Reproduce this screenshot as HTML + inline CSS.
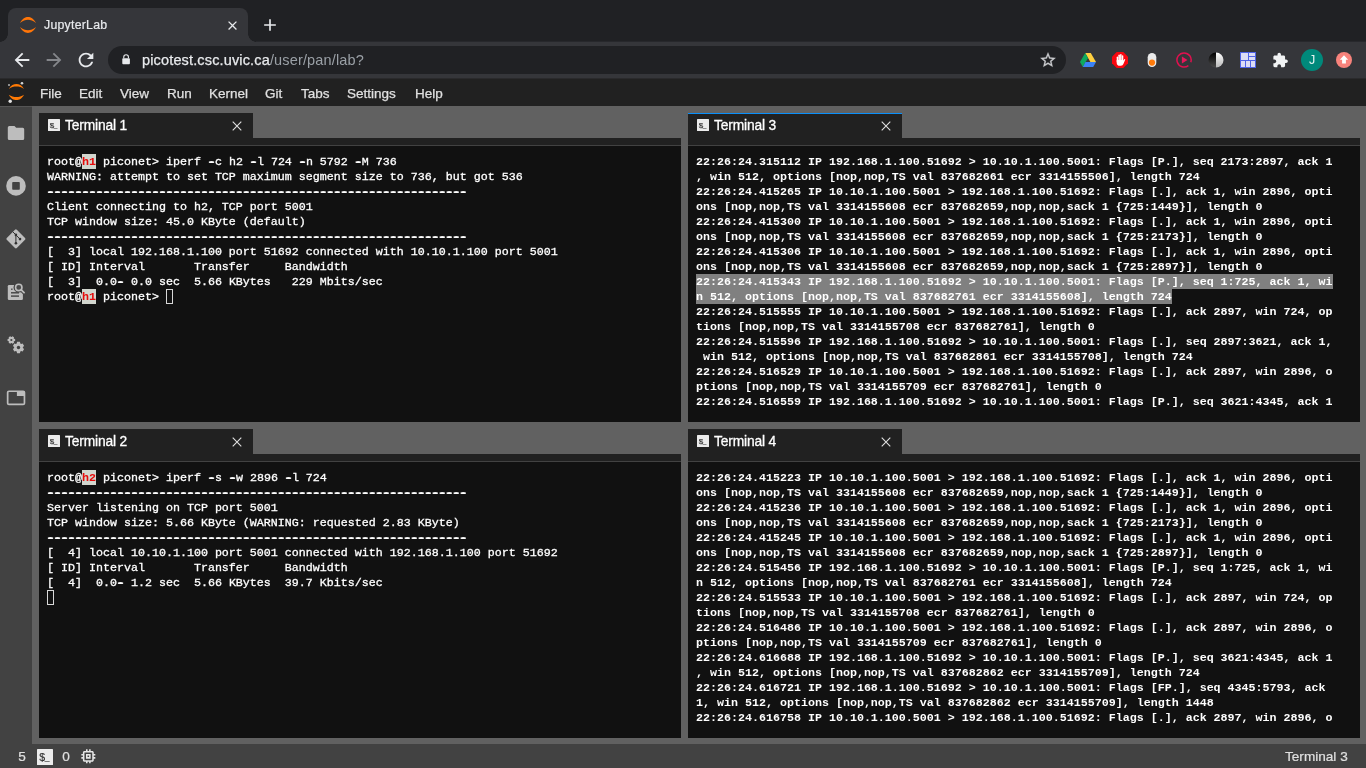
<!DOCTYPE html>
<html lang="en">
<head>
<meta charset="utf-8">
<title>JupyterLab</title>
<style>
*{box-sizing:border-box;margin:0;padding:0}
html,body{width:1366px;height:768px;overflow:hidden;background:#616161}
body{position:relative;font-family:"Liberation Sans",sans-serif;color:#e8eaed}
.abs{position:absolute}
svg{display:block}
.mi,.st,.lbl,#url,#tabtitle,.ticon,.gz{transform:translateZ(0)}
/* ---------- browser chrome ---------- */
#tabstrip{left:0;top:0;width:1366px;height:41px;background:#202124}
#tab{left:8px;top:8px;width:240px;height:34px;background:#35363a;border-radius:8px 8px 0 0}
#tab:before,#tab:after{content:"";position:absolute;bottom:0;width:8px;height:8px;background:radial-gradient(circle at 0 0,#202124 7.5px,#35363a 8px)}
#tab:before{left:-8px}
#tab:after{right:-8px;background:radial-gradient(circle at 100% 0,#202124 7.5px,#35363a 8px)}
#tabtitle{left:44px;top:17px;font-size:12.300px;line-height:16px;color:#e8eaed;white-space:nowrap;letter-spacing:.250px;-webkit-text-stroke:.200px #e8eaed}
#toolbar{left:0;top:42px;width:1366px;height:36px;background:#35363a}
#omni{left:108px;top:46px;width:958px;height:28px;border-radius:14px;background:#202124}
#url{left:142px;top:50px;font-size:14.500px;line-height:20px;white-space:nowrap;color:#e8eaed;letter-spacing:.150px}
#url{-webkit-text-stroke:.250px #e8eaed}
#url span{color:#9aa0a6;-webkit-text-stroke:0}
/* ---------- jupyterlab ---------- */
#menubar{left:0;top:78px;width:1366px;height:28px;background:#212121}
.mi{position:absolute;top:84.500px;font-size:13.500px;-webkit-text-stroke:.250px #e0e0e0;line-height:18px;color:#e0e0e0;white-space:nowrap}
#sideline{left:0;top:106px;width:32px;height:1px;background:#555}
#sidebar{left:0;top:107px;width:32px;height:637px;background:#424242}
#status{left:0;top:744px;width:1366px;height:24px;background:#424242}
.st{position:absolute;top:748px;font-size:13.600px;-webkit-text-stroke:.200px #e0e0e0;line-height:18px;color:#e0e0e0;white-space:nowrap}
/* panels */
.tabbar{position:absolute;height:25px}
.dtab{position:absolute;left:0;top:0;width:214px;height:25px;background:#212121}
.dtab.cur{box-shadow:inset 0 1px 0 #0a90fa}
.dtab .lbl{position:absolute;left:26px;top:3.800px;font-size:13.800px;letter-spacing:-.150px;-webkit-text-stroke:.300px #fff;line-height:18px;color:#fff;white-space:nowrap}
.ticon{position:absolute;left:9px;top:6px;width:12px;height:12px}
.tclose{position:absolute;left:193px;top:8px;width:10px;height:10px}
.strip{position:absolute;height:8px;background:#212121;border-bottom:1px solid #424242}
.term{position:absolute;background:#111;overflow:hidden}
.term pre{position:absolute;left:8px;top:8.500px;font-family:"Liberation Mono",monospace;font-size:11.666px;line-height:15px;color:#fff;white-space:pre;transform:translateZ(0);-webkit-text-stroke:.300px #fff}
.term.b pre{font-weight:bold;-webkit-text-stroke:0}
.hl{color:#e60a0a;font-weight:bold;-webkit-text-stroke:0}
.hlb{position:absolute;width:14px;height:15px;background:#d2d6ce}
.dl,.term i{font-style:normal;text-shadow:1px 0 0 #fff,-1px 0 0 #fff,0 -1px 0 rgba(255,255,255,.65),1px -1px 0 rgba(255,255,255,.65),-1px -1px 0 rgba(255,255,255,.65)}
.cursor{position:absolute;width:7px;height:15px;border:1px solid #d8d8d8}
.sel{position:absolute;background:#808080}
</style>
</head>
<body>
<!-- ================= CHROME ================= -->
<div id="tabstrip" class="abs"></div>
<div class="abs" style="left:0;top:41px;width:1366px;height:1px;background:#27282c"></div>
<div id="tab" class="abs"></div>
<svg class="abs" style="left:20px;top:17px" width="16" height="16" viewBox="0 0 16 16">
  <path d="M0 5.900C2.300 1.600 5.300 0 8 0s5.700 1.600 8 5.900C13.300 3.700 10.600 2.800 8 2.800S2.700 3.700 0 5.900z" fill="#ff7508"/>
  <path d="M0 10.100C2.300 14.400 5.300 16 8 16s5.700-1.600 8-5.900C13.300 12.300 10.600 13.200 8 13.200S2.700 12.300 0 10.100z" fill="#ff7508"/>
</svg>
<div id="tabtitle" class="abs">JupyterLab</div>
<svg class="abs" style="left:224.500px;top:17.500px" width="15" height="15" viewBox="0 0 24 24"><path d="M19 6.41L17.59 5 12 10.59 6.41 5 5 6.41 10.59 12 5 17.59 6.41 19 12 13.41 17.59 19 19 17.59 13.41 12z" fill="#e8eaed"/></svg>
<svg class="abs" style="left:260px;top:15px" width="20" height="20" viewBox="0 0 24 24"><path d="M19 13h-6v6h-2v-6H5v-2h6V5h2v6h6v2z" fill="#e8eaed"/></svg>
<div id="toolbar" class="abs"></div>
<svg class="abs" style="left:11px;top:49px" width="22" height="22" viewBox="0 0 24 24"><path d="M20 11H7.83l5.59-5.59L12 4l-8 8 8 8 1.41-1.41L7.83 13H20v-2z" fill="#e8eaed"/></svg>
<svg class="abs" style="left:43px;top:49px" width="22" height="22" viewBox="0 0 24 24"><path d="M12 4l-1.41 1.41L16.17 11H4v2h12.17l-5.58 5.59L12 20l8-8z" fill="#85878b"/></svg>
<svg class="abs" style="left:75px;top:49px" width="22" height="22" viewBox="0 0 24 24"><path d="M17.65 6.35C16.2 4.9 14.21 4 12 4c-4.42 0-7.99 3.58-7.99 8s3.57 8 7.99 8c3.73 0 6.84-2.55 7.73-6h-2.08c-.82 2.33-3.04 4-5.65 4-3.31 0-6-2.690-6-6s2.690-6 6-6c1.660 0 3.140.690 4.220 1.780L13 11h7V4l-2.350 2.350z" fill="#e8eaed"/></svg>
<div id="omni" class="abs"></div>
<svg class="abs" style="left:121px;top:54px" width="10.200" height="11" viewBox="0 0 12 13"><path d="M2.600 5V3.600a3.400 3.400 0 0 1 6.800 0V5h-1.300V3.600a2.100 2.100 0 0 0-4.200 0V5z" fill="#e8eaed"/><rect x="1.500" y="5" width="9" height="7" rx="1" fill="#e8eaed"/></svg>
<div id="url" class="abs">picotest.csc.uvic.ca<span>/user/pan/lab?</span></div>
<svg class="abs" style="left:1039px;top:51px" width="18" height="18" viewBox="0 0 24 24"><path d="M22 9.240l-7.190-.620L12 2 9.190 8.630 2 9.240l5.460 4.730L5.820 21 12 17.270 18.180 21l-1.630-7.030L22 9.240zM12 15.400l-3.760 2.270 1-4.280-3.320-2.880 4.380-.380L12 6.100l1.710 4.040 4.380.380-3.320 2.880 1 4.280L12 15.400z" fill="#cbcdd0" stroke="#cbcdd0" stroke-width=".400"/></svg>
<!-- extensions -->
<svg class="abs" style="left:1080px;top:52px" width="16" height="16" viewBox="0 0 16 16">
  <path d="M5.200 1h5.600L16 10.100h-5.600z" fill="#ffcf3f"/><path d="M5.200 1L0 10.100l2.800 4.900L8 5.900z" fill="#0fa95e"/><path d="M5.500 10.100H16L13.200 15H2.800z" fill="#3b82f6"/>
</svg>
<svg class="abs" style="left:1112px;top:52px" width="16" height="16" viewBox="0 0 16 16">
  <path d="M4.700 0h6.600L16 4.700v6.600L11.300 16H4.700L0 11.300V4.700z" fill="#f8060f"/>
  <rect x="4.700" y="4.400" width="1.500" height="6" rx=".750" fill="#fff"/><rect x="6.400" y="2.600" width="1.500" height="7" rx=".750" fill="#fff"/><rect x="8.100" y="2.100" width="1.500" height="7" rx=".750" fill="#fff"/><rect x="9.800" y="3.200" width="1.500" height="7" rx=".750" fill="#fff"/>
  <path d="M4.700 8h6.600v.800l1-1.500c.300-.500 1.100-.100.900.500l-1.700 4c-.500 1.200-1.300 2-2.500 2H7.600c-1.600 0-2.900-1.300-2.900-2.900z" fill="#fff"/>
</svg>
<svg class="abs" style="left:1144px;top:52px" width="16" height="16" viewBox="0 0 16 16"><rect x="3.700" y="1" width="8.600" height="14" rx="4.300" fill="#ebebeb"/><circle cx="8" cy="10.600" r="3.100" fill="#ff7a0a"/></svg>
<svg class="abs" style="left:1176px;top:52px" width="16" height="16" viewBox="0 0 16 16"><path d="M12.400 13.600A7.100 7.100 0 1 1 14.800 10.200" fill="none" stroke="#e0114f" stroke-width="1.500"/><path d="M5.900 4.600l5.600 3.400-5.600 3.400z" fill="#e8175a"/></svg>
<svg class="abs" style="left:1208px;top:52px" width="16" height="16" viewBox="0 0 16 16"><defs><linearGradient id="hg" x1="0" y1="0" x2="0" y2="1"><stop offset="0" stop-color="#fff"/><stop offset="1" stop-color="#b8b8b8"/></linearGradient><linearGradient id="hb" x1="0" y1="0" x2="0" y2="1"><stop offset="0" stop-color="#000"/><stop offset="1" stop-color="#4a4a4a"/></linearGradient></defs><path d="M8 .5a7.500 7.500 0 0 0 0 15z" fill="url(#hb)"/><path d="M8 .5a7.500 7.500 0 0 1 0 15z" fill="url(#hg)"/></svg>
<svg class="abs" style="left:1240px;top:52px" width="16" height="16" viewBox="0 0 16 16"><rect width="16" height="16" fill="#4f63e6"/><rect x="1" y="1" width="7" height="7" fill="#dcdcf5"/><rect x="9" y="1" width="6" height="3" fill="#dcdcf5"/><rect x="9" y="5" width="6" height="3" fill="#dcdcf5"/><rect x="1" y="9" width="4" height="6" fill="#dcdcf5"/><rect x="6" y="9" width="4" height="6" fill="#dcdcf5"/><rect x="11" y="9" width="4" height="6" fill="#dcdcf5"/></svg>
<svg class="abs" style="left:1271.700px;top:51.600px" width="16.500" height="16.500" viewBox="0 0 24 24"><path d="M20.500 11H19V7c0-1.100-.900-2-2-2h-4V3.500C13 2.120 11.880 1 10.500 1S8 2.120 8 3.500V5H4c-1.100 0-1.990.900-1.990 2v3.800H3.500c1.490 0 2.700 1.210 2.700 2.700s-1.210 2.700-2.700 2.700H2V20c0 1.100.900 2 2 2h3.800v-1.500c0-1.490 1.210-2.700 2.700-2.700 1.490 0 2.700 1.210 2.700 2.700V22H17c1.100 0 2-.900 2-2v-4h1.500c1.380 0 2.500-1.120 2.500-2.500S21.880 11 20.500 11z" fill="#f1f3f4"/></svg>
<div class="abs" style="left:1301px;top:49px;width:22px;height:22px;border-radius:11px;background:#00897b"></div>
<div class="abs" style="left:1301px;top:49px;width:22px;height:22px;text-align:center;font-size:12.500px;line-height:22px;color:#e6f5f3;transform:translateZ(0)">J</div>
<svg class="abs" style="left:1336px;top:52px" width="16" height="16" viewBox="0 0 16 16"><circle cx="8" cy="8" r="8" fill="#f8837c"/><path d="M8 3.300l4.200 4.400H9.900v3.800H6.100V7.700H3.800z" fill="#fff"/></svg>

<!-- ================= JUPYTERLAB ================= -->
<div id="menubar" class="abs"></div>
<div class="abs" style="left:0;top:78px;width:1366px;height:1px;background:#2a2a2c"></div>
<svg class="abs" style="left:0;top:78px" width="32" height="28" viewBox="0 0 32 28">
  <path d="M8.800 10.900C11 7 13.600 5.900 16.400 5.900S21.800 7 24 10.900C21.600 9 19 8.400 16.400 8.400S11.200 9 8.800 10.900z" fill="#ff7a05"/>
  <path d="M8.800 16.800C11 20.900 13.600 22 16.400 22s5.400-1.100 7.600-5.200C21.600 18.500 19 19.100 16.400 19.100S11.200 18.500 8.800 16.800z" fill="#ff7a05"/>
  <circle cx="9" cy="7" r="1" fill="#b5b5b5"/><circle cx="22" cy="5.300" r="1.300" fill="#d5d5d5"/><circle cx="10.200" cy="23.200" r="1.700" fill="#e2e2e2"/>
</svg>
<div class="mi" style="left:40px">File</div>
<div class="mi" style="left:79px">Edit</div>
<div class="mi" style="left:120px">View</div>
<div class="mi" style="left:167px">Run</div>
<div class="mi" style="left:209px">Kernel</div>
<div class="mi" style="left:265px">Git</div>
<div class="mi" style="left:301px">Tabs</div>
<div class="mi" style="left:347px">Settings</div>
<div class="mi" style="left:415px">Help</div>
<div id="sideline" class="abs"></div>
<div id="sidebar" class="abs"></div>
<!--SIDE_START-->
<svg class="abs" style="left:0;top:107px" width="32" height="637" viewBox="0 107 32 637">
<path d="M9.300 126h5.200l1.700 1.800h6.500a1.500 1.500 0 0 1 1.500 1.500v9.200a1.500 1.500 0 0 1-1.500 1.500h-13.400a1.500 1.500 0 0 1-1.500-1.500v-11a1.500 1.500 0 0 1 1.500-1.500z" fill="#bdbdbd"/>
<circle cx="16" cy="185.900" r="9.800" fill="#bdbdbd"/><rect x="12.200" y="182.100" width="7.600" height="7.600" rx=".800" fill="#424242"/>
<rect x="-7.100" y="-7.100" width="14.200" height="14.200" rx="1.300" transform="translate(15.900 238.800) rotate(45)" fill="#bdbdbd"/>
<path d="M12.800 231.800L20 239.100M15.900 234.900V243.300" stroke="#303030" stroke-width="1" fill="none"/><circle cx="15.900" cy="234.900" r="1.300" fill="#303030"/><circle cx="15.900" cy="243.300" r="1.300" fill="#303030"/><circle cx="20" cy="239.100" r="1.300" fill="#303030"/>
<rect x="7.800" y="285" width="15.100" height="15.100" rx="1.300" fill="#bdbdbd"/>
<path d="M9.400 286.400h5v12.200h-5z" fill="none"/>
<rect x="11" y="288.600" width="1.600" height="1.200" fill="#424242"/><rect x="11" y="292.100" width="8" height="1.400" fill="#424242"/><rect x="11" y="295.400" width="8" height="1.400" fill="#424242"/>
<circle cx="18.750" cy="287.400" r="5.200" fill="#424242"/><path d="M20.500 289.300l5.800 5.600" stroke="#424242" stroke-width="3.600" fill="none"/>
<circle cx="18.750" cy="287.400" r="3.200" fill="#4a4a4a" stroke="#bdbdbd" stroke-width="1.600"/><path d="M21.200 289.900l2.900 2.800" stroke="#bdbdbd" stroke-width="1.700" stroke-linecap="round" fill="none"/>
<path d="M13.98 338.77L15.13 339.06L15.13 340.94L13.98 341.23L13.73 341.66L14.06 342.81L12.43 343.75L11.60 342.89L11.10 342.89L10.27 343.75L8.64 342.81L8.97 341.66L8.72 341.23L7.57 340.94L7.57 339.06L8.72 338.77L8.97 338.34L8.64 337.19L10.27 336.25L11.10 337.11L11.60 337.11L12.43 336.25L14.06 337.19L13.73 338.34z" fill="#bdbdbd"/><circle cx="11.350" cy="340" r="1.100" fill="#424242"/>
<path d="M20.37 351.48L19.90 353.13L17.10 353.13L16.63 351.48L15.98 351.11L14.32 351.53L12.93 349.10L14.12 347.88L14.12 347.12L12.93 345.90L14.32 343.47L15.98 343.89L16.63 343.52L17.10 341.87L19.90 341.87L20.37 343.52L21.02 343.89L22.68 343.47L24.07 345.90L22.88 347.12L22.88 347.88L24.07 349.10L22.68 351.53L21.02 351.11z" fill="#bdbdbd"/><circle cx="18.500" cy="347.500" r="1.700" fill="#424242"/>
<rect x="7.650" y="391.250" width="16.800" height="13.200" rx="1.300" fill="none" stroke="#bdbdbd" stroke-width="1.700"/><rect x="16.900" y="391" width="7.500" height="5" fill="#bdbdbd"/>
</svg>
<!--SIDE_END-->
<div id="status" class="abs"></div>
<div class="st" style="left:18.300px">5</div>
<div class="st" style="left:62.300px">0</div>
<div class="st" style="left:1285px">Terminal 3</div>
<svg class="abs gz" style="left:37px;top:749px" width="16" height="16" viewBox="0 0 16 16"><rect width="16" height="16" rx=".600" fill="#ececec"/><text x="2.300" y="12.200" font-family="Liberation Sans, sans-serif" font-size="10.500" fill="#2c2c2c" stroke="#2c2c2c" stroke-width=".150">$<tspan font-size="8.500" dx="-.300" dy="-1.200">_</tspan></text></svg>
<svg class="abs" style="left:78.670px;top:746.670px" width="18.670" height="18.670" viewBox="0 0 24 24"><path d="M15 9H9v6h6V9zm-2 4h-2v-2h2v2zm8-2V9h-2V7c0-1.100-.900-2-2-2h-2V3h-2v2h-2V3H9v2H7c-1.100 0-2 .900-2 2v2H3v2h2v2H3v2h2v2c0 1.100.900 2 2 2h2v2h2v-2h2v2h2v-2h2c1.100 0 2-.900 2-2v-2h2v-2h-2v-2h2zm-4 6H7V7h10v10z" fill="#e6e6e6"/></svg>
<!--PANELS_START-->
<div class="tabbar" style="left:39px;top:113px;width:642px"><div class="dtab"><svg class="ticon" viewBox="0 0 12 12"><rect width="12" height="12" rx=".500" fill="#ececec"/><text x="1.700" y="9.200" font-family="Liberation Sans, sans-serif" font-size="8" fill="#2c2c2c" stroke="#2c2c2c" stroke-width=".150">$<tspan font-size="6.400" dx="-.300" dy="-.900">_</tspan></text></svg><div class="lbl">Terminal 1</div><svg class="tclose" viewBox="0 0 10 10"><path d="M.700.700l8.600 8.600M9.300.700L.700 9.300" stroke="#e0e0e0" stroke-width="1.100" fill="none"/></svg></div></div>
<div class="strip" style="left:39px;top:138px;width:642px"></div>
<div class="term" style="left:39px;top:146px;width:642px;height:276px"><div class="hlb" style="left:43px;top:8px"></div><div class="hlb" style="left:43px;top:143px"></div><div class="cursor" style="left:127px;top:143px"></div><pre>root@<span class="hl">h1</span> piconet&gt; iperf <i>-</i>c h2 <i>-</i>l 724 <i>-</i>n 5792 <i>-</i>M 736
WARNING: attempt to set TCP maximum segment size to 736, but got 536
<span class="dl">------------------------------------------------------------</span>
Client connecting to h2, TCP port 5001
TCP window size: 45.0 KByte (default)
<span class="dl">------------------------------------------------------------</span>
[  3] local 192.168.1.100 port 51692 connected with 10.10.1.100 port 5001
[ ID] Interval       Transfer     Bandwidth
[  3]  0.0<i>-</i> 0.0 sec  5.66 KBytes   229 Mbits/sec
root@<span class="hl">h1</span> piconet&gt; </pre></div>
<div class="tabbar" style="left:688px;top:113px;width:672px"><div class="dtab cur"><svg class="ticon" viewBox="0 0 12 12"><rect width="12" height="12" rx=".500" fill="#ececec"/><text x="1.700" y="9.200" font-family="Liberation Sans, sans-serif" font-size="8" fill="#2c2c2c" stroke="#2c2c2c" stroke-width=".150">$<tspan font-size="6.400" dx="-.300" dy="-.900">_</tspan></text></svg><div class="lbl">Terminal 3</div><svg class="tclose" viewBox="0 0 10 10"><path d="M.700.700l8.600 8.600M9.300.700L.700 9.300" stroke="#e0e0e0" stroke-width="1.100" fill="none"/></svg></div></div>
<div class="strip" style="left:688px;top:138px;width:672px"></div>
<div class="term b" style="left:688px;top:146px;width:672px;height:276px"><div class="sel" style="left:8px;top:128px;width:637px;height:15px"></div><div class="sel" style="left:8px;top:143px;width:476px;height:15px"></div><pre>22:26:24.315112 IP 192.168.1.100.51692 &gt; 10.10.1.100.5001: Flags [P.], seq 2173:2897, ack 1
, win 512, options [nop,nop,TS val 837682661 ecr 3314155506], length 724
22:26:24.415265 IP 10.10.1.100.5001 &gt; 192.168.1.100.51692: Flags [.], ack 1, win 2896, opti
ons [nop,nop,TS val 3314155608 ecr 837682659,nop,nop,sack 1 {725:1449}], length 0
22:26:24.415300 IP 10.10.1.100.5001 &gt; 192.168.1.100.51692: Flags [.], ack 1, win 2896, opti
ons [nop,nop,TS val 3314155608 ecr 837682659,nop,nop,sack 1 {725:2173}], length 0
22:26:24.415306 IP 10.10.1.100.5001 &gt; 192.168.1.100.51692: Flags [.], ack 1, win 2896, opti
ons [nop,nop,TS val 3314155608 ecr 837682659,nop,nop,sack 1 {725:2897}], length 0
22:26:24.415343 IP 192.168.1.100.51692 &gt; 10.10.1.100.5001: Flags [P.], seq 1:725, ack 1, wi
n 512, options [nop,nop,TS val 837682761 ecr 3314155608], length 724
22:26:24.515555 IP 10.10.1.100.5001 &gt; 192.168.1.100.51692: Flags [.], ack 2897, win 724, op
tions [nop,nop,TS val 3314155708 ecr 837682761], length 0
22:26:24.515596 IP 192.168.1.100.51692 &gt; 10.10.1.100.5001: Flags [.], seq 2897:3621, ack 1,
 win 512, options [nop,nop,TS val 837682861 ecr 3314155708], length 724
22:26:24.516529 IP 10.10.1.100.5001 &gt; 192.168.1.100.51692: Flags [.], ack 2897, win 2896, o
ptions [nop,nop,TS val 3314155709 ecr 837682761], length 0
22:26:24.516559 IP 192.168.1.100.51692 &gt; 10.10.1.100.5001: Flags [P.], seq 3621:4345, ack 1</pre></div>
<div class="tabbar" style="left:39px;top:429px;width:642px"><div class="dtab"><svg class="ticon" viewBox="0 0 12 12"><rect width="12" height="12" rx=".500" fill="#ececec"/><text x="1.700" y="9.200" font-family="Liberation Sans, sans-serif" font-size="8" fill="#2c2c2c" stroke="#2c2c2c" stroke-width=".150">$<tspan font-size="6.400" dx="-.300" dy="-.900">_</tspan></text></svg><div class="lbl">Terminal 2</div><svg class="tclose" viewBox="0 0 10 10"><path d="M.700.700l8.600 8.600M9.300.700L.700 9.300" stroke="#e0e0e0" stroke-width="1.100" fill="none"/></svg></div></div>
<div class="strip" style="left:39px;top:454px;width:642px"></div>
<div class="term" style="left:39px;top:462px;width:642px;height:276px"><div class="hlb" style="left:43px;top:8px"></div><div class="cursor" style="left:8px;top:128px"></div><pre>root@<span class="hl">h2</span> piconet&gt; iperf <i>-</i>s <i>-</i>w 2896 <i>-</i>l 724
<span class="dl">------------------------------------------------------------</span>
Server listening on TCP port 5001
TCP window size: 5.66 KByte (WARNING: requested 2.83 KByte)
<span class="dl">------------------------------------------------------------</span>
[  4] local 10.10.1.100 port 5001 connected with 192.168.1.100 port 51692
[ ID] Interval       Transfer     Bandwidth
[  4]  0.0<i>-</i> 1.2 sec  5.66 KBytes  39.7 Kbits/sec</pre></div>
<div class="tabbar" style="left:688px;top:429px;width:672px"><div class="dtab"><svg class="ticon" viewBox="0 0 12 12"><rect width="12" height="12" rx=".500" fill="#ececec"/><text x="1.700" y="9.200" font-family="Liberation Sans, sans-serif" font-size="8" fill="#2c2c2c" stroke="#2c2c2c" stroke-width=".150">$<tspan font-size="6.400" dx="-.300" dy="-.900">_</tspan></text></svg><div class="lbl">Terminal 4</div><svg class="tclose" viewBox="0 0 10 10"><path d="M.700.700l8.600 8.600M9.300.700L.700 9.300" stroke="#e0e0e0" stroke-width="1.100" fill="none"/></svg></div></div>
<div class="strip" style="left:688px;top:454px;width:672px"></div>
<div class="term b" style="left:688px;top:462px;width:672px;height:276px"><pre>22:26:24.415223 IP 10.10.1.100.5001 &gt; 192.168.1.100.51692: Flags [.], ack 1, win 2896, opti
ons [nop,nop,TS val 3314155608 ecr 837682659,nop,nop,sack 1 {725:1449}], length 0
22:26:24.415236 IP 10.10.1.100.5001 &gt; 192.168.1.100.51692: Flags [.], ack 1, win 2896, opti
ons [nop,nop,TS val 3314155608 ecr 837682659,nop,nop,sack 1 {725:2173}], length 0
22:26:24.415245 IP 10.10.1.100.5001 &gt; 192.168.1.100.51692: Flags [.], ack 1, win 2896, opti
ons [nop,nop,TS val 3314155608 ecr 837682659,nop,nop,sack 1 {725:2897}], length 0
22:26:24.515456 IP 192.168.1.100.51692 &gt; 10.10.1.100.5001: Flags [P.], seq 1:725, ack 1, wi
n 512, options [nop,nop,TS val 837682761 ecr 3314155608], length 724
22:26:24.515533 IP 10.10.1.100.5001 &gt; 192.168.1.100.51692: Flags [.], ack 2897, win 724, op
tions [nop,nop,TS val 3314155708 ecr 837682761], length 0
22:26:24.516486 IP 10.10.1.100.5001 &gt; 192.168.1.100.51692: Flags [.], ack 2897, win 2896, o
ptions [nop,nop,TS val 3314155709 ecr 837682761], length 0
22:26:24.616688 IP 192.168.1.100.51692 &gt; 10.10.1.100.5001: Flags [P.], seq 3621:4345, ack 1
, win 512, options [nop,nop,TS val 837682862 ecr 3314155709], length 724
22:26:24.616721 IP 192.168.1.100.51692 &gt; 10.10.1.100.5001: Flags [FP.], seq 4345:5793, ack 
1, win 512, options [nop,nop,TS val 837682862 ecr 3314155709], length 1448
22:26:24.616758 IP 10.10.1.100.5001 &gt; 192.168.1.100.51692: Flags [.], ack 2897, win 2896, o</pre></div>
<!--PANELS_END-->
</body>
</html>
